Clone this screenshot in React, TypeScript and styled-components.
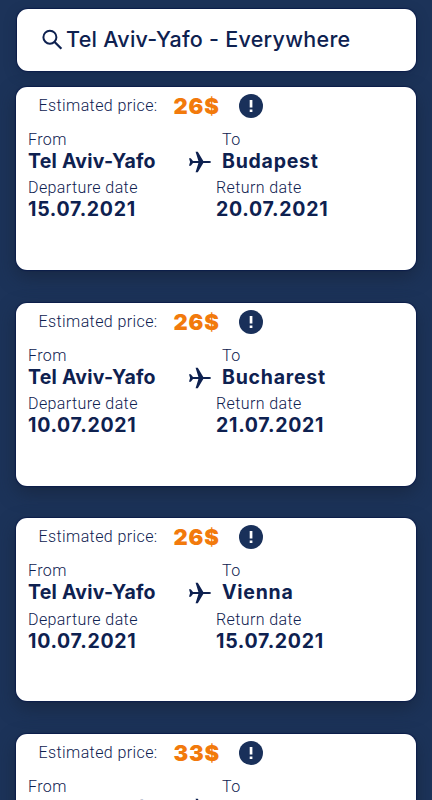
import React from "react";
import styled, { createGlobalStyle } from "styled-components";

const navy = "#0e2150";

const GlobalStyle = createGlobalStyle`
  * { box-sizing: border-box; }
  body {
    margin: 0;
    height: 800px;
    overflow: hidden;
    background: #1c3359;
    color: ${navy};
    font-family: Inter, "Open Sans", sans-serif;
  }
`;

const Page = styled.main`
  display: flex;
  flex-direction: column;
  height: 800px;
  padding: 9px 16px 0;
  overflow: hidden;
`;

const SearchBar = styled.header`
  display: flex;
  align-items: center;
  flex: none;
  gap: 3px;
  height: 62px;
  margin-left: 1px;
  padding: 0 0 1px 24px;
  border-radius: 11px;
  background: #fff;
  box-shadow: 0 0 1px 1px #0c1d4a, 0 4px 14px rgba(10, 22, 50, 0.25);
`;

const SearchTitle = styled.h1`
  margin: 0;
  padding-bottom: 1px;
  font-size: 21.5px;
  font-weight: 500;
  line-height: 28px;
  letter-spacing: 0.27px;
  white-space: nowrap;
`;

const Results = styled.section`
  display: flex;
  flex-direction: column;
  gap: 32.3px;
  margin-top: 16px;
`;

const Card = styled.article`
  flex: none;
  height: 183.3px;
  padding: 0 12px;
  border-radius: 11px;
  background: #fff;
  box-shadow: 0 0 1px 1px #0c1d4a, 0 7px 18px rgba(22, 34, 54, 0.6);
`;

const PriceRow = styled.div`
  display: grid;
  grid-template-columns: 135px 65px auto;
  align-items: center;
  height: 38px;
  padding-left: 10.5px;
  margin-bottom: 4px;
`;

const Label = styled.div`
  font-family: Roboto, sans-serif;
  font-size: 16px;
  font-weight: 300;
  line-height: 22px;
  letter-spacing: 0.4px;
  white-space: nowrap;
`;

const valueSpacing = { origin: 0.22, destination: 0.75, date: 0.72 };

const Value = styled.div<{ $kind: keyof typeof valueSpacing }>`
  font-size: 19.5px;
  font-weight: 700;
  line-height: 20px;
  letter-spacing: ${(p) => valueSpacing[p.$kind]}px;
  white-space: nowrap;
`;

const Price = styled.strong`
  color: #f27a0c;
  font-size: 22px;
  font-weight: 900;
  line-height: 28px;
  letter-spacing: 0.8px;
`;

const Route = styled.div`
  display: grid;
  grid-template-columns: 160.5px 33.5px auto;
  align-items: end;
`;

const Dates = styled.div`
  display: grid;
  grid-template-columns: 188px auto;
  margin-top: 6.4px;
`;

const Icon = styled.svg`
  display: block;
  flex: none;
`;

const PlaneIcon = styled(Icon)`
  margin-bottom: -2px;
`;

const flights = [
  { price: "26$", to: "Budapest", departure: "15.07.2021", back: "20.07.2021" },
  { price: "26$", to: "Bucharest", departure: "10.07.2021", back: "21.07.2021" },
  { price: "26$", to: "Vienna", departure: "10.07.2021", back: "15.07.2021" },
  { price: "33$", to: "Budapest", departure: "10.07.2021", back: "15.07.2021" },
];

const Search = () => (
  <Icon width="22" height="22" viewBox="0 0 22 22" fill="none" stroke={navy} strokeWidth="2">
    <circle cx="8.9" cy="8.2" r="6.5" />
    <path d="M13.4 12.7 20.4 19.7" strokeWidth="2.3" />
  </Icon>
);

const Plane = () => (
  <PlaneIcon width="23" height="22" viewBox="0 0 23 22">
    <path
      fill={navy}
      d="M0 7.2H1.8L4 9.9H9.4L6.6 0.8H8.8L14.3 9.9H20.3Q22 10 22 11T20.3 12.1H14.3L8.8 21.2H6.6L9.4 12.1H4L1.8 14.8H0L1.1 11Z"
    />
  </PlaneIcon>
);

const Alert = () => (
  <Icon width="24" height="24" viewBox="0 0 24 24">
    <circle cx="12" cy="12" r="12" fill="#19305a" />
    <path fill="#fff" d="M10.7 6h2.7v7.6h-2.7zM10.7 15.4h2.7v2.6h-2.7z" />
  </Icon>
);

export default function App() {
  return (
    <>
      <GlobalStyle />
      <Page>
        <SearchBar>
          <Search />
          <SearchTitle>Tel Aviv-Yafo - Everywhere</SearchTitle>
        </SearchBar>
        <Results>
          {flights.map((flight, index) => (
            <Card key={index}>
              <PriceRow>
                <Label>Estimated price:</Label>
                <Price>{flight.price}</Price>
                <Alert />
              </PriceRow>
              <Route>
                <div>
                  <Label>From</Label>
                  <Value $kind="origin">Tel Aviv-Yafo</Value>
                </div>
                <Plane />
                <div>
                  <Label>To</Label>
                  <Value $kind="destination">{flight.to}</Value>
                </div>
              </Route>
              <Dates>
                <div>
                  <Label>Departure date</Label>
                  <Value $kind="date">{flight.departure}</Value>
                </div>
                <div>
                  <Label>Return date</Label>
                  <Value $kind="date">{flight.back}</Value>
                </div>
              </Dates>
            </Card>
          ))}
        </Results>
      </Page>
    </>
  );
}
